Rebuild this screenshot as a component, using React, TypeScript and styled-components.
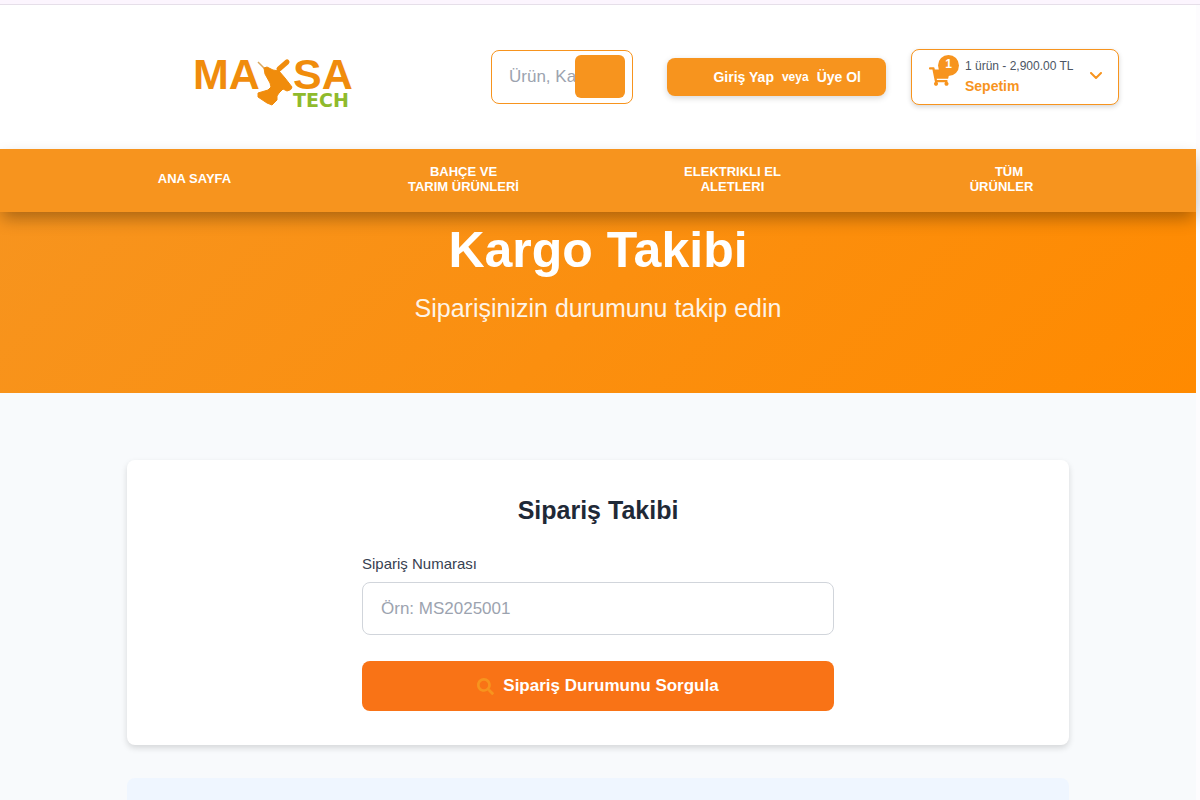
import React from "react";
import styled, { createGlobalStyle, css } from "styled-components";
import { FaShoppingCart, FaSearch } from "react-icons/fa";

const brand = "#f7941e";

const GlobalStyle = createGlobalStyle`
  *, *::before, *::after { box-sizing: border-box; }
  body {
    margin: 0;
    background: #fdfcfe;
    color: #1f2937;
    font-family: "Liberation Sans", Arial, sans-serif;
    overflow: hidden;
  }
  h1, h2, p { margin: 0; }
  a { text-decoration: none; }
  button, input { font-family: inherit; }
`;

const Page = styled.div`
  display: flex;
  flex-direction: column;
  height: 100vh;
  overflow: hidden;
`;

const TopStrip = styled.div`
  flex: none;
  height: 5px;
  background: #fcf5fe;
  border-bottom: 1px solid #e6dfe9;
`;

const Shell = styled.div`
  flex: 1;
  margin-right: 4px;
  background: #f8fafc;
`;

const Header = styled.header`
  display: flex;
  align-items: center;
  min-height: 144px;
  padding: 0 77px 0 58px;
  background: #fff;
`;

const LogoLink = styled.a`
  flex: 1;
  display: flex;
  justify-content: center;
  padding-top: 4px;
`;

const Logo = styled.svg`
  width: 164px;
  height: 64px;
  overflow: visible;
  font-family: "Liberation Sans", Arial, sans-serif;
`;

const SearchForm = styled.form`
  display: flex;
  align-items: flex-start;
  width: 142px;
  height: 54px;
  padding: 4px 7px 0 17px;
  border: 1px solid ${brand};
  border-radius: 8px;
`;

const SearchInput = styled.input`
  flex: 1;
  min-width: 0;
  height: 44px;
  padding: 0;
  border: 0;
  outline: 0;
  background: transparent;
  font-size: 17px;
  &::placeholder { color: #9ca3af; opacity: 1; }
`;

const SearchButton = styled.button`
  flex: none;
  width: 50px;
  height: 43px;
  border: 0;
  border-radius: 6px;
  background: ${brand};
`;

const AuthBar = styled.div`
  display: flex;
  align-items: center;
  justify-content: flex-end;
  gap: 8px;
  width: 219px;
  height: 38px;
  margin: 0 25px 0 34px;
  padding: 0 25px;
  border-radius: 8px;
  background: ${brand};
  box-shadow: 0 2px 6px rgba(0, 0, 0, 0.16);
  color: #fff;
  font-size: 12px;
  font-weight: 700;
`;

const AuthLink = styled.a`
  color: #fff;
  font-size: 14px;
  white-space: nowrap;
`;

const CartButton = styled.button`
  display: flex;
  align-items: center;
  width: 208px;
  height: 56px;
  padding: 0 16px 2px 17px;
  border: 1px solid ${brand};
  border-radius: 8px;
  background: #fff;
  box-shadow: 0 2px 5px rgba(0, 0, 0, 0.16);
  text-align: left;
`;

const CartIcon = styled.span`
  position: relative;
  display: flex;
  width: 36px;
  color: ${brand};
`;

const Badge = styled.span`
  position: absolute;
  top: -11px;
  left: 9px;
  width: 21px;
  height: 21px;
  border-radius: 50%;
  background: ${brand};
  color: #fff;
  font-size: 12px;
  font-weight: 700;
  line-height: 18px;
  text-align: center;
`;

const CartText = styled.span`
  flex: 1;
  display: flex;
  flex-direction: column;
  color: #4b5563;
  font-size: 12px;
  line-height: 20px;
  white-space: nowrap;
`;

const CartTitle = styled.strong`
  color: ${brand};
  font-size: 14px;
`;

const Nav = styled.nav`
  position: relative;
  display: grid;
  grid-template-columns: repeat(4, 1fr);
  align-items: center;
  min-height: 63px;
  padding: 0 60px 4px;
  background: ${brand};
  box-shadow: 0 8px 16px -2px rgba(0, 0, 0, 0.32);
`;

const NavLink = styled.a`
  color: #fff;
  font-size: 13px;
  font-weight: 700;
  line-height: 15px;
  text-align: center;
`;

const NavIconSpace = styled.span`
  display: inline-block;
  width: 15px;
`;

const Hero = styled.section`
  min-height: 181px;
  padding-top: 10px;
  background: linear-gradient(135deg, ${brand} 0%, #ff8a00 100%);
  color: #fff;
  text-align: center;
`;

const HeroTitle = styled.h1`
  font-size: 50px;
  line-height: 56px;
`;

const HeroText = styled.p`
  margin-top: 16px;
  font-size: 25px;
  line-height: 28px;
  opacity: 0.9;
`;

const Main = styled.main`
  max-width: 942px;
  margin: 0 auto;
  padding-top: 67px;
`;

const Card = styled.section`
  padding: 34px 24px;
  border-radius: 8px;
  background: #fff;
  box-shadow: 0 3px 6px rgba(0, 0, 0, 0.14);
`;

const CardTitle = styled.h2`
  font-size: 25px;
  line-height: 32px;
  text-align: center;
`;

const TrackForm = styled.form`
  display: flex;
  flex-direction: column;
  max-width: 472px;
  margin: 27px auto 0;
`;

const Label = styled.label`
  color: #374151;
  font-size: 15px;
  line-height: 22px;
`;

const field = css`
  width: 100%;
  border-radius: 8px;
  font-size: 17px;
`;

const OrderInput = styled.input`
  ${field}
  height: 53px;
  margin-top: 7px;
  padding: 0 18px;
  border: 1px solid #d1d5db;
  background: #fff;
  &::placeholder { color: #9ca3af; opacity: 1; }
`;

const SubmitButton = styled.button`
  ${field}
  display: flex;
  align-items: center;
  justify-content: center;
  gap: 9px;
  height: 50px;
  margin-top: 26px;
  border: 0;
  background: #f97316;
  color: #fff;
  font-weight: 700;
`;

const InfoPanel = styled.section`
  min-height: 200px;
  margin-top: 33px;
  border-radius: 8px;
  background: #eff6ff;
`;

const links = [
  { lines: ["ANA SAYFA"] },
  { lines: ["BAHÇE VE", "TARIM ÜRÜNLERİ"] },
  { lines: ["ELEKTRIKLI EL", "ALETLERI"] },
  { lines: ["TÜM", "ÜRÜNLER"], iconSpace: true },
];

export default function App() {
  return (
    <>
      <GlobalStyle />
      <Page>
        <TopStrip />
        <Shell>
          <Header>
            <LogoLink href="#" aria-label="Maxsa Tech">
              <Logo viewBox="0 0 164 64">
                <g fill="#f08c0c" fontSize="43" fontWeight="700">
                  <text x="0" y="42">MA</text>
                  <text x="100" y="42">SA</text>
                </g>
                <path d="M65 15L72 22" stroke="#d9a860" strokeWidth="1.5" />
                <path d="M86 22L94 15" stroke="#f08c0c" strokeWidth="5" strokeLinecap="round" />
                <path
                  fill="#f08c0c"
                  stroke="#f08c0c"
                  strokeWidth="1"
                  strokeLinejoin="round"
                  d="M71 21L74 20L80 23L86 24L92 31L99 40Q99 43 94 44L90 42L86 46L84 49L84 53L79 58L74 56L65 50L65 46L75 43L78 40L77 36L72 27Z"
                />
                <text x="100" y="60" fill="#8fba2c" fontFamily="DejaVu Sans" fontSize="19" fontWeight="700">TECH</text>
              </Logo>
            </LogoLink>
            <SearchForm>
              <SearchInput aria-label="Ürün, Kategori ara" placeholder="Ürün, Kategori" />
              <SearchButton type="button" aria-label="Ara" />
            </SearchForm>
            <AuthBar>
              <AuthLink href="#">Giriş Yap</AuthLink>
              <span>veya</span>
              <AuthLink href="#">Üye Ol</AuthLink>
            </AuthBar>
            <CartButton type="button">
              <CartIcon>
                <FaShoppingCart size={21} />
                <Badge>1</Badge>
              </CartIcon>
              <CartText>
                <span>1 ürün - 2,900.00 TL</span>
                <CartTitle>Sepetim</CartTitle>
              </CartText>
              <svg width="12" height="8" viewBox="0 0 12 8" fill="none" stroke={brand} strokeWidth="2">
                <path d="M1 1L6 6L11 1" strokeLinecap="round" strokeLinejoin="round" />
              </svg>
            </CartButton>
          </Header>
          <Nav>
            {links.map(({ lines, iconSpace }) => (
              <NavLink href="#" key={lines[0]}>
                {iconSpace && <NavIconSpace />}
                {lines.map((line, i) => (
                  <React.Fragment key={line}>
                    {i > 0 && <br />}
                    {line}
                  </React.Fragment>
                ))}
              </NavLink>
            ))}
          </Nav>
          <Hero>
            <HeroTitle>Kargo Takibi</HeroTitle>
            <HeroText>Siparişinizin durumunu takip edin</HeroText>
          </Hero>
          <Main>
            <Card>
              <CardTitle>Sipariş Takibi</CardTitle>
              <TrackForm>
                <Label htmlFor="order">Sipariş Numarası</Label>
                <OrderInput id="order" placeholder="Örn: MS2025001" />
                <SubmitButton type="button">
                  <FaSearch size={17} color={brand} />
                  Sipariş Durumunu Sorgula
                </SubmitButton>
              </TrackForm>
            </Card>
            <InfoPanel />
          </Main>
        </Shell>
      </Page>
    </>
  );
}
